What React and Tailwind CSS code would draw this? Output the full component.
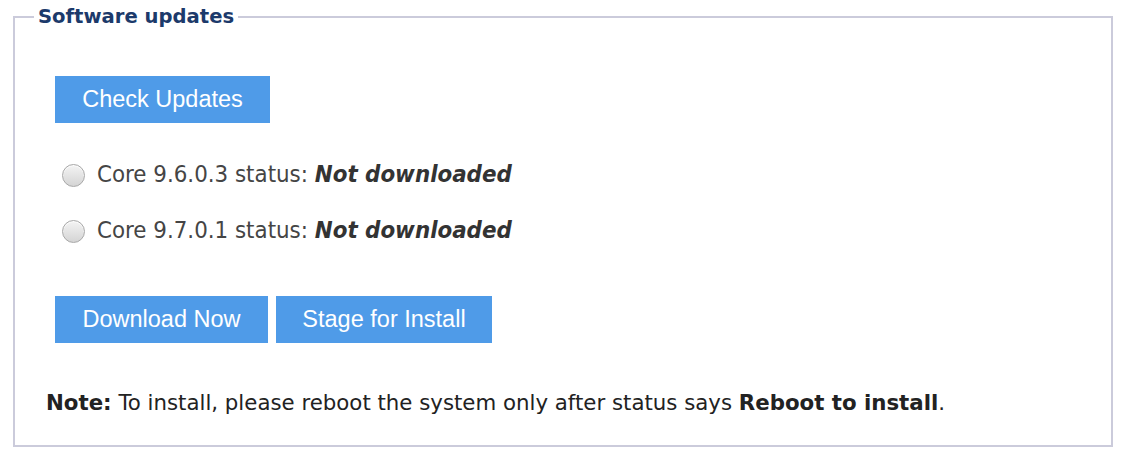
import React from "react";

const Button = ({ children, width }) => (
  <button
    className={`h-[47px] ${width} bg-[#4f9be8] text-white text-[23.5px] font-['Liberation_Sans',Arial,sans-serif] leading-none`}
  >
    {children}
  </button>
);

const CoreRow = ({ version }) => (
  <label className="flex items-center h-[40px] text-[23.8px] text-[#454545] font-['DejaVu_Sans_Condensed','DejaVu_Sans',sans-serif]">
    <span className="w-[23px] h-[23px] rounded-full border border-[#a8a8a8] bg-gradient-to-b from-[#f4f4f4] to-[#d4d4d4] mr-[12px] shadow-[inset_0_1px_1px_rgba(255,255,255,0.9)]" />
    <span>Core {version} status:&nbsp;</span>
    <em className="font-bold text-[#333]">Not downloaded</em>
  </label>
);

export default function App() {
  return (
    <div className="w-[1128px] h-[462px] bg-white pl-[13px] pr-[15px]">
      <fieldset className="border-2 border-[#cbcbdb] h-[447px]">
        <legend className="ml-[19px] px-[4px] h-[34px] leading-[34px] text-[19.6px] font-bold text-[#1c3a6b] font-['DejaVu_Sans',Verdana,sans-serif]">
          Software updates
        </legend>
        <div className="pl-[40px]">
          <div className="mt-[42px]">
            <Button width="w-[215px]">Check Updates</Button>
          </div>
          <div className="mt-[32px] ml-[7px]">
            <CoreRow version="9.6.0.3" />
            <div className="h-[16px]" />
            <CoreRow version="9.7.0.1" />
          </div>
          <div className="mt-[45px] flex gap-[8px]">
            <Button width="w-[213px]">Download Now</Button>
            <Button width="w-[216px]">Stage for Install</Button>
          </div>
          <p className="mt-[44px] -ml-[9px] text-[21.3px] text-[#222] font-['DejaVu_Sans',sans-serif]">
            <b>Note:</b> To install, please reboot the system only after status says{" "}
            <b>Reboot to install</b>.
          </p>
        </div>
      </fieldset>
    </div>
  );
}
